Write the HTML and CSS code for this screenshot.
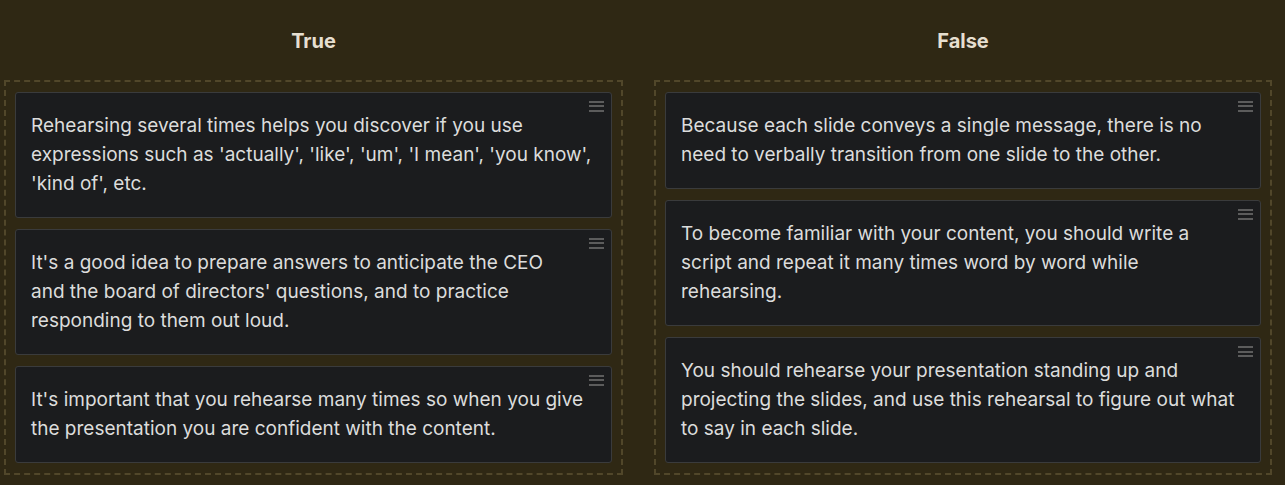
FILE: index.html
```html
<!DOCTYPE html>
<html lang="en">
<head>
<meta charset="utf-8">
<title>True / False</title>
<link rel="stylesheet" href="styles.css">
</head>
<body>
<div class="board">
  <section class="column">
    <h2 class="column-title">True</h2>
    <div class="dropzone">
      <div class="card"><span class="handle"></span><p>Rehearsing several times helps you discover if you use<br>expressions such as 'actually', 'like', 'um', 'I mean', 'you know',<br>'kind of', etc.</p></div>
      <div class="card"><span class="handle"></span><p>It's a good idea to prepare answers to anticipate the CEO<br>and the board of directors' questions, and to practice<br>responding to them out loud.</p></div>
      <div class="card"><span class="handle"></span><p>It's important that you rehearse many times so when you give<br>the presentation you are confident with the content.</p></div>
    </div>
  </section>
  <section class="column">
    <h2 class="column-title">False</h2>
    <div class="dropzone">
      <div class="card"><span class="handle"></span><p>Because each slide conveys a single message, there is no<br>need to verbally transition from one slide to the other.</p></div>
      <div class="card"><span class="handle"></span><p>To become familiar with your content, you should write a<br>script and repeat it many times word by word while<br>rehearsing.</p></div>
      <div class="card"><span class="handle"></span><p>You should rehearse your presentation standing up and<br>projecting the slides, and use this rehearsal to figure out what<br>to say in each slide.</p></div>
    </div>
  </section>
</div>
</body>
</html>
```
FILE: styles.css
```css
html, body {
  margin: 0;
  padding: 0;
  background: #2f2814;
  height: 100%;
}
body {
  font-family: Inter, "Noto Sans", sans-serif;
  color: #dcdcdc;
  overflow: hidden;
}
.board {
  display: grid;
  grid-template-columns: 619px 618px;
  column-gap: 31px;
  padding: 0 0 0 4px;
}
.column {
  display: flex;
  flex-direction: column;
}
.column-title {
  margin: 0;
  height: 80px;
  box-sizing: border-box;
  padding-top: 29px;
  text-align: center;
  font-size: 20px;
  font-weight: 700;
  color: #e6dfd0;
  line-height: 24px;
}
.dropzone {
  flex: 1;
  border: 2px dashed #51472a;
  padding: 10px 9px 10px;
  display: flex;
  flex-direction: column;
  gap: 11px;
}
.card {
  position: relative;
  background: #1b1c1e;
  border: 1px solid #3a3b3c;
  border-radius: 3px;
  padding: 18px 6px 19px 15px;
}
.card p {
  margin: 0;
  font-size: 19px;
  line-height: 29px;
  white-space: nowrap;
}
.handle {
  position: absolute;
  top: 8px;
  right: 7px;
  width: 15px;
  height: 11px;
  background: linear-gradient(#5c5c5c 0 2px, transparent 2px 4.5px, #5c5c5c 4.5px 6.5px, transparent 6.5px 9px, #5c5c5c 9px 11px);
}
```
